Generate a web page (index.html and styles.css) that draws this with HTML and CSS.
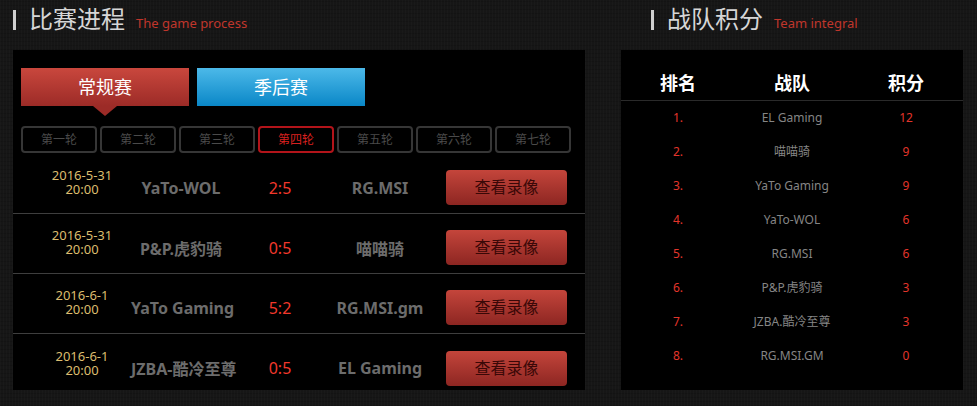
FILE: index.html
```html
<!DOCTYPE html>
<html lang="zh-CN">
<head>
    <meta charset="UTF-8">
    <meta name="viewport" content="width=device-width, initial-scale=1.0">
    <title>比赛进程</title>
    <link rel="stylesheet" href="styles.css">
</head>
<body>

    <div class="page">
        <div class="col-left">
            <h2 class="title"><span class="bar"></span>比赛进程<small>The game process</small></h2>
            <div class="panel">
                <div class="panel-top">
                    <div class="tabs">
                        <div class="tab tab-red active">常规赛</div>
                        <div class="tab tab-blue">季后赛</div>
                    </div>
                    <div class="rounds">
                        <span class="round">第一轮</span>
                        <span class="round">第二轮</span>
                        <span class="round">第三轮</span>
                        <span class="round current">第四轮</span>
                        <span class="round">第五轮</span>
                        <span class="round">第六轮</span>
                        <span class="round">第七轮</span>
                    </div>
                </div>

                <div class="match">
                    <div class="date"><span>2016-5-31</span><span>20:00</span></div>
                    <div class="team">YaTo-WOL</div>
                    <div class="score">2:5</div>
                    <div class="team">RG.MSI</div>
                    <a class="video-btn">查看录像</a>
                </div>
                <div class="match">
                    <div class="date"><span>2016-5-31</span><span>20:00</span></div>
                    <div class="team">P&amp;P.虎豹骑</div>
                    <div class="score">0:5</div>
                    <div class="team">喵喵骑</div>
                    <a class="video-btn">查看录像</a>
                </div>
                <div class="match">
                    <div class="date"><span>2016-6-1</span><span>20:00</span></div>
                    <div class="team">YaTo Gaming</div>
                    <div class="score">5:2</div>
                    <div class="team">RG.MSI.gm</div>
                    <a class="video-btn">查看录像</a>
                </div>
                <div class="match last">
                    <div class="date"><span>2016-6-1</span><span>20:00</span></div>
                    <div class="team">JZBA-酷冷至尊</div>
                    <div class="score">0:5</div>
                    <div class="team">EL Gaming</div>
                    <a class="video-btn">查看录像</a>
                </div>
            </div>
        </div>

        <div class="col-right">
            <h2 class="title title-right"><span class="bar"></span>战队积分<small>Team integral</small></h2>
            <div class="panel">
                <div class="rank-head">
                    <span>排名</span>
                    <span>战队</span>
                    <span>积分</span>
                </div>
                <ul class="rank-list">
                    <li><span class="num">1.</span><span class="name">EL Gaming</span><span class="pts">12</span></li>
                    <li><span class="num">2.</span><span class="name">喵喵骑</span><span class="pts">9</span></li>
                    <li><span class="num">3.</span><span class="name">YaTo Gaming</span><span class="pts">9</span></li>
                    <li><span class="num">4.</span><span class="name">YaTo-WOL</span><span class="pts">6</span></li>
                    <li><span class="num">5.</span><span class="name">RG.MSI</span><span class="pts">6</span></li>
                    <li><span class="num">6.</span><span class="name">P&amp;P.虎豹骑</span><span class="pts">3</span></li>
                    <li><span class="num">7.</span><span class="name">JZBA.酷冷至尊</span><span class="pts">3</span></li>
                    <li><span class="num">8.</span><span class="name">RG.MSI.GM</span><span class="pts">0</span></li>
                </ul>
            </div>
        </div>
    </div>

</body>
</html>
```

FILE: styles.css
```css
body {
    margin: 0;
    background: #161616;
    background-image:
        repeating-linear-gradient(90deg, rgba(255,255,255,0.015) 0 1px, transparent 1px 3px),
        repeating-linear-gradient(0deg, rgba(0,0,0,0.12) 0 1px, transparent 1px 4px);
    font-family: "Noto Sans", "Noto Sans CJK SC", sans-serif;
    height: 406px;
    overflow: hidden;
}
.page {
    display: flex;
    gap: 36px;
    padding-left: 13px;
}
.col-left {
    width: 572px;
}
.col-right {
    width: 342px;
}
.title {
    margin: 0;
    height: 50px;
    line-height: 38px;
    font-size: 24px;
    font-weight: normal;
    color: #d6d6d6;
    white-space: nowrap;
}
.title-right {
    padding-left: 30px;
}
.title .bar {
    display: inline-block;
    width: 3px;
    height: 20px;
    background: #cfcfcf;
    margin-right: 13px;
    vertical-align: -2px;
}
.title small {
    font-size: 13px;
    color: #c0362c;
    margin-left: 11px;
}
.panel {
    background: #000;
    height: 340px;
    overflow: hidden;
}
.panel-top {
    padding: 18px 14px 0 8px;
}
.tabs {
    display: flex;
    gap: 8px;
}
.tab {
    position: relative;
    width: 168px;
    height: 38px;
    line-height: 38px;
    text-align: center;
    color: #fff;
    font-size: 18px;
}
.tab-red {
    background: linear-gradient(#c9473d, #9c2b27);
}
.tab-blue {
    background: linear-gradient(#4cb9e9, #0a87c7);
}
.tab.active::after {
    content: "";
    position: absolute;
    left: 50%;
    bottom: -10px;
    margin-left: -12px;
    border-left: 12px solid transparent;
    border-right: 12px solid transparent;
    border-top: 10px solid #9c2b27;
}
.rounds {
    display: flex;
    gap: 3px;
    margin-top: 20px;
    margin-bottom: 1px;
}
.round {
    box-sizing: border-box;
    width: 76px;
    height: 27px;
    line-height: 23px;
    border: 2px solid #363636;
    border-radius: 4px;
    text-align: center;
    font-size: 12px;
    color: #4a4a4a;
}
.round.current {
    border-color: #b3141a;
    color: #d8201f;
}
.match {
    box-sizing: border-box;
    display: grid;
    grid-template-columns: 98px 100px 98px 102px 136px;
    align-items: center;
    height: 60px;
    padding: 8px 0 0 20px;
    border-bottom: 1px solid #3e3e3e;
    text-align: center;
}
.match.last {
    border-bottom: none;
}
.date {
    display: flex;
    flex-direction: column;
    font-size: 13px;
    color: #dcbd6e;
    margin-bottom: 11px;
}
.date span {
    height: 14px;
    line-height: 14px;
}
.team {
    font-size: 16px;
    font-weight: bold;
    color: #6c6c6c;
    white-space: nowrap;
}
.score {
    font-size: 16px;
    color: #f2382b;
}
.video-btn {
    display: block;
    justify-self: end;
    width: 121px;
    height: 35px;
    line-height: 35px;
    border-radius: 4px;
    background: linear-gradient(#c4453b, #8d2622);
    color: #3a0807;
    font-size: 16px;
    cursor: pointer;
}
.rank-head {
    display: grid;
    grid-template-columns: repeat(3, 1fr);
    text-align: center;
    padding-top: 17px;
    padding-bottom: 1px;
    height: 32px;
    line-height: 32px;
    font-size: 18px;
    font-weight: bold;
    color: #fff;
    border-bottom: 1px solid #2a2a2a;
}
.rank-list {
    list-style: none;
    margin: 0;
    padding: 0;
}
.rank-list li {
    display: grid;
    grid-template-columns: repeat(3, 1fr);
    text-align: center;
    height: 34px;
    line-height: 34px;
    font-size: 12px;
}
.rank-list .num,
.rank-list .pts {
    color: #e3352b;
}
.rank-list .name {
    color: #858585;
}
```
